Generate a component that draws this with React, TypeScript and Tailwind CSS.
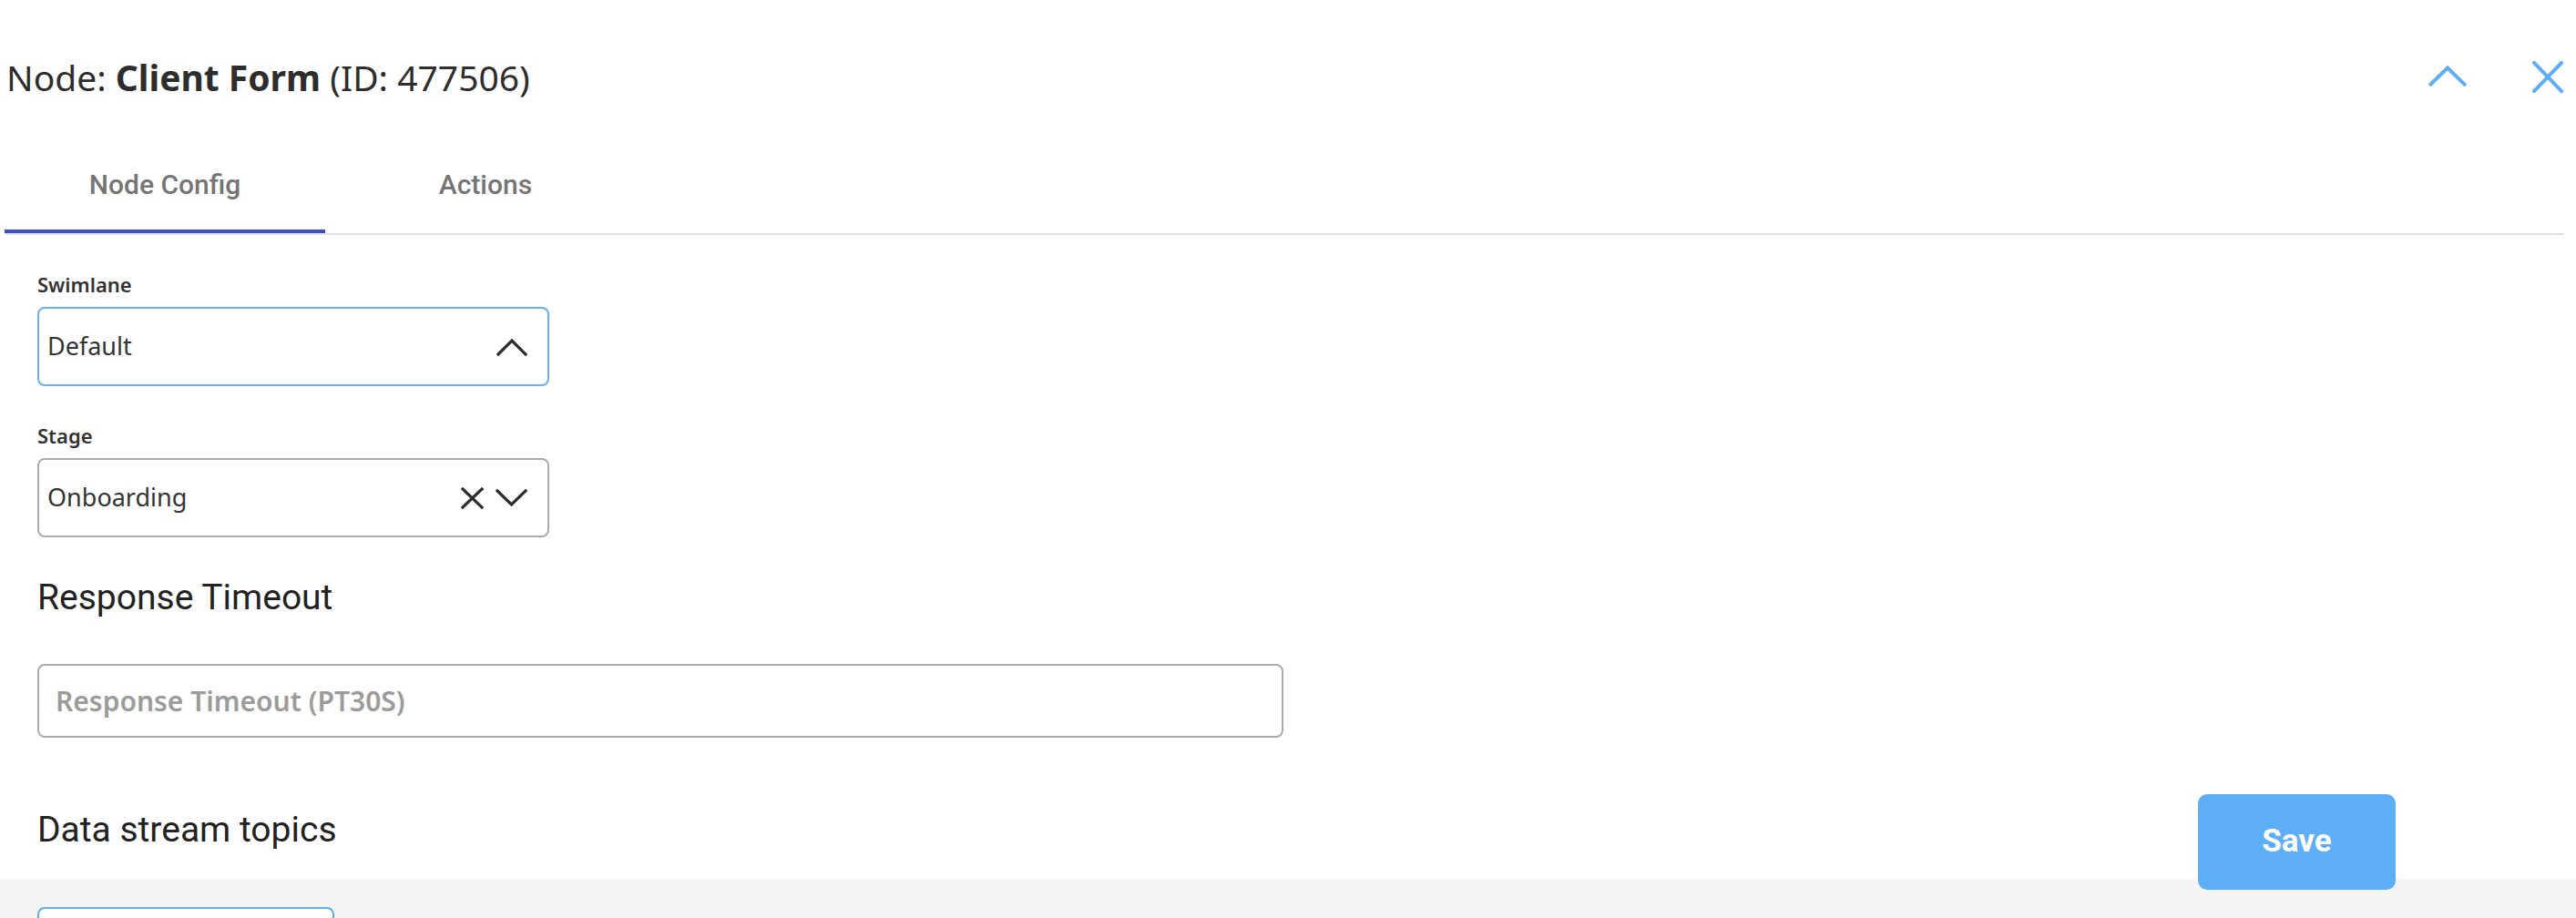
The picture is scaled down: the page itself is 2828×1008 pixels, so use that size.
import { useState } from 'react';

const noto = { fontFamily: '"Noto Sans", "Open Sans", sans-serif' };
const roboto = { fontFamily: 'Roboto, "Liberation Sans", sans-serif' };

function ChevronUp({ className = '', strokeWidth = 3.2 }: { className?: string; strokeWidth?: number }) {
  return (
    <svg width="34" height="20" viewBox="0 0 34 20" className={className} fill="none">
      <polyline points="2,18 17,3 32,18" stroke="currentColor" strokeWidth={strokeWidth} strokeLinecap="square" />
    </svg>
  );
}

function ChevronDown({ className = '' }: { className?: string }) {
  return (
    <svg width="35" height="20" viewBox="0 0 35 20" className={className} fill="none">
      <polyline points="2,2 17.5,17 33,2" stroke="currentColor" strokeWidth="3.2" strokeLinecap="square" />
    </svg>
  );
}

function Cross({ w, h, sw, className = '' }: { w: number; h: number; sw: number; className?: string }) {
  return (
    <svg width={w} height={h} viewBox={`0 0 ${w} ${h}`} className={className} fill="none">
      <line x1="2" y1="2" x2={w - 2} y2={h - 2} stroke="currentColor" strokeWidth={sw} strokeLinecap="square" />
      <line x1={w - 2} y1="2" x2="2" y2={h - 2} stroke="currentColor" strokeWidth={sw} strokeLinecap="square" />
    </svg>
  );
}

function Field({ label, focused, children }: { label: string; focused?: boolean; children: React.ReactNode }) {
  return (
    <div className="flex flex-col">
      <label className="text-[22px] leading-[28px] font-semibold text-[#333]" style={noto}>
        {label}
      </label>
      <div
        className={`mt-[11px] h-[87px] w-[562px] rounded-lg border-2 bg-white pl-[9px] pr-[22px] flex items-center justify-between ${
          focused ? 'border-[#64b0f4]' : 'border-[#ababab]'
        }`}
      >
        {children}
      </div>
    </div>
  );
}

export default function App() {
  const [tab, setTab] = useState(0);
  const tabs = ['Node Config', 'Actions'];

  return (
    <div className="relative w-[2828px] h-[1008px] overflow-hidden bg-white flex flex-col">
      {/* header */}
      <div className="flex items-start justify-between pt-[65px] pl-[7px] pr-[14px]">
        <h1 className="text-[39px] leading-[40px] text-[#2d2d2d]" style={noto}>
          Node: <span className="font-bold">Client Form</span> (ID: 477506)
        </h1>
        <div className="flex items-start gap-[72px] text-[#5eaef6]">
          <svg width="42" height="23" viewBox="0 0 42 23" fill="none" className="mt-[7px]">
            <polyline points="2.5,20.5 21,2.5 39.5,20.5" stroke="currentColor" strokeWidth="4" strokeLinecap="square" />
          </svg>
          <Cross w={34} h={35} sw={4} className="mt-[2px]" />
        </div>
      </div>

      {/* tabs */}
      <div className="flex ml-[5px] mr-[13px] border-b-2 border-[#e0e0e0]">
        {tabs.map((t, i) => (
          <button
            key={t}
            onClick={() => setTab(i)}
            className={`w-[352px] pt-[80px] pb-[31px] border-b-4 text-[30px] leading-[36px] font-medium text-[#757575] ${
              tab === i ? 'border-[#3f51b5]' : 'border-transparent'
            }`}
            style={roboto}
          >
            {t}
          </button>
        ))}
      </div>

      {/* form */}
      <div className="flex flex-col px-[41px] pt-[40px]">
        <Field label="Swimlane" focused>
          <span className="text-[27px] text-[#333]" style={noto}>Default</span>
          <ChevronUp className="text-[#2d2d2d]" />
        </Field>
        <div className="mt-[40px]">
          <Field label="Stage">
            <span className="text-[27px] text-[#333]" style={noto}>Onboarding</span>
            <div className="flex items-center gap-[13px] text-[#2d2d2d]">
              <Cross w={25} h={24} sw={3.2} />
              <ChevronDown />
            </div>
          </Field>
        </div>

        <h2 className="mt-[43px] text-[39px] leading-[46px] text-[#222]" style={roboto}>
          Response Timeout
        </h2>
        <input
          placeholder="Response Timeout (PT30S)"
          className="mt-[50px] h-[81px] w-[1368px] rounded-lg border-2 border-[#ababab] pl-[18px] text-[30px] font-semibold text-[#333] placeholder:text-[#9b9b9b] outline-none"
          style={noto}
        />

        <h2 className="mt-[78px] text-[39px] leading-[46px] text-[#222]" style={roboto}>
          Data stream topics
        </h2>
      </div>

      {/* lower area */}
      <div className="mt-[31px] flex-1 bg-[#f4f4f4] px-[41px] pt-[31px]">
        <div className="h-[80px] w-[326px] rounded-lg border-2 border-[#5eaef6] bg-white" />
      </div>

      <button
        className="absolute right-[198px] top-[872px] w-[217px] h-[105px] rounded-[10px] bg-[#5eaef7] text-white text-[35px] font-bold"
        style={roboto}
      >
        Save
      </button>
    </div>
  );
}
